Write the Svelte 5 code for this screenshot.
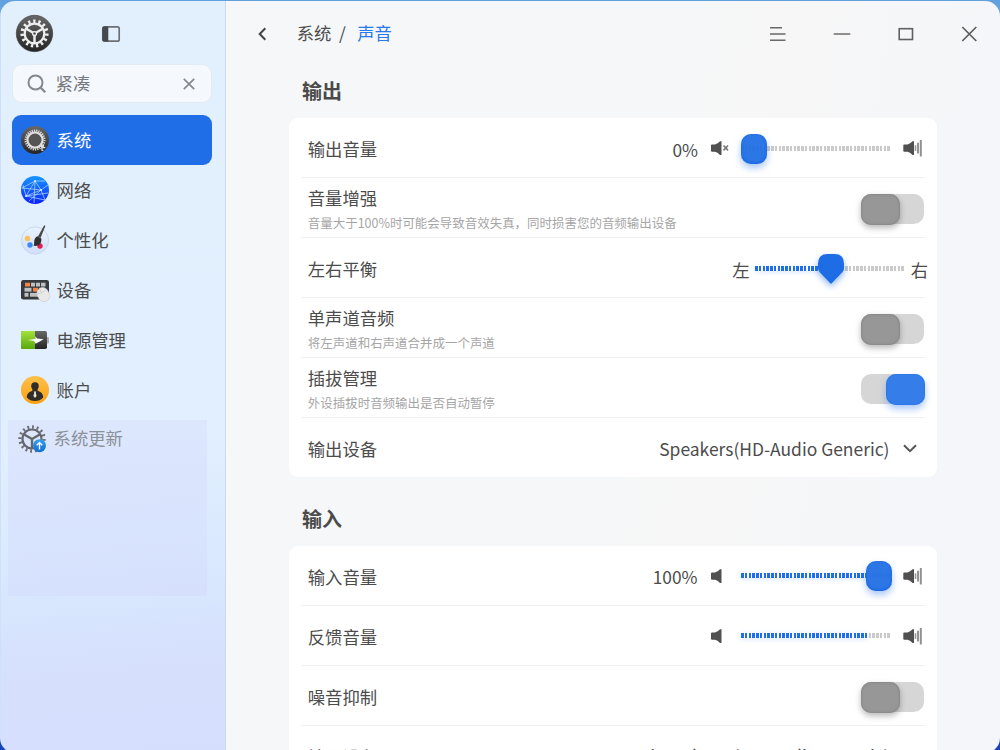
<script>
  const navItems = [
    { id: 'system', label: '系统', active: true },
    { id: 'network', label: '网络' },
    { id: 'personal', label: '个性化' },
    { id: 'devices', label: '设备' },
    { id: 'power', label: '电源管理' },
    { id: 'account', label: '账户' },
  ];
  const output = [
    { label: '输出音量', type: 'volume', percent: '0%', low: 'muted', fill: 0, thumb: 0 },
    { label: '音量增强', hint: '音量大于100%时可能会导致音效失真，同时损害您的音频输出设备', type: 'switch', on: false },
    { label: '左右平衡', type: 'balance', fill: 66 },
    { label: '单声道音频', hint: '将左声道和右声道合并成一个声道', type: 'switch', on: false },
    { label: '插拔管理', hint: '外设插拔时音频输出是否自动暂停', type: 'switch', on: true },
    { label: '输出设备', type: 'select', value: 'Speakers(HD-Audio Generic)' },
  ];
  const input = [
    { label: '输入音量', type: 'volume', percent: '100%', low: 'plain', fill: 126, thumb: 125 },
    { label: '反馈音量', type: 'volume', percent: '', low: 'plain', fill: 125.5, thumb: null },
    { label: '噪音抑制', type: 'switch', on: false },
    { label: '输入设备', type: 'select', value: 'Microphone(HD-Audio Generic)' },
  ];
  const groups = [
    { title: '输出', rows: output },
    { title: '输入', rows: input, second: true },
  ];
</script>

{#snippet icon(id)}
  <svg class="nav-icon" width="28" height="28" viewBox="0 0 28 28">
    {#if id === 'system'}
      <circle cx="14" cy="14" r="14" fill="url(#dark)" />
      <circle cx="14" cy="14" r="9.5" fill="none" stroke="#dcdcdc" stroke-width="2" pathLength="52" stroke-dasharray="1.1 0.9" />
      <circle cx="14" cy="14" r="7.6" fill="#555" stroke="#dedede" stroke-width="2.2" />
      <path d="M18.5 20.5l2.2-1 1.5 1 .5-1.8M20.7 19.5l.3 4.8 1.4.2M21 22l3.3-.6" fill="none" stroke="#e4e4e4" stroke-width="1.2" />
    {:else if id === 'network'}
      <circle cx="14" cy="14" r="14" fill="url(#net)" />
      <g stroke="#b5dcff" stroke-width=".8" fill="none" opacity=".9">
        <path d="M14 5L5 20L20 14L27 9M14 5L20 14L24 24M14 5L13 27M5 20L24 24M20 14L8 25M14 5L1 12L20 14M14 5L24 5M5 20L2 9M5 20L27 17" />
      </g>
      <g fill="#d5ecff"><circle cx="14" cy="5" r="1" /><circle cx="5" cy="20" r="1" /><circle cx="20" cy="14" r="1" /></g>
    {:else if id === 'personal'}
      <circle cx="14" cy="14.5" r="13.6" fill="url(#pal)" stroke="#bdcdea" stroke-width=".7" />
      <circle cx="12.5" cy="6" r="3.2" fill="#e4effd" />
      <circle cx="6.5" cy="12.5" r="2.7" fill="#f8c35a" /><circle cx="9" cy="19" r="2.7" fill="#3c88f5" /><circle cx="19" cy="20" r="2.7" fill="#e31d4d" />
      <path d="M23.2-.8l1.2.8-4.9 12-2.6-1.6z" fill="#4a4a4a" />
      <path d="M16.3 10.2l4 2.4c.5 3-.9 6.1-3 6.8-1.8.5-3.6.8-4.9.1 1.1-.9.7-2.4.8-4.2.1-2.3 1.4-4.2 3.1-5.1z" fill="#303030" />
    {:else if id === 'devices'}
      <rect x="0" y="4" width="28" height="19.5" rx="2.3" fill="#36393d" />
      <g fill="#bfc0c2"><rect x="10" y="6.7" width="4" height="3.8" /><rect x="15" y="6.7" width="4" height="3.8" /><rect x="20" y="6.7" width="4.5" height="3.8" /><rect x="3.5" y="11.8" width="7" height="3.8" /><rect x="18" y="11.8" width="6" height="3.8" /><rect x="3.5" y="16.9" width="4" height="3.8" /><rect x="9" y="16.9" width="9" height="3.8" /></g>
      <rect x="4" y="6.7" width="5" height="3.8" fill="#f28546" /><rect x="12" y="11.8" width="5" height="3.8" fill="#f28546" />
      <rect x="16.5" y="11.5" width="11.5" height="14.5" rx="5.7" fill="#e9e9e9" stroke="#c9c9c9" stroke-width=".5" transform="rotate(-28 22 18.5)" />
      <path d="M15.8 17.5q4 1 8.7-3.2M20.3 16.5l-1.7-3.7" stroke="#bdbdbd" stroke-width=".6" fill="none" />
    {:else if id === 'power'}
      <rect x="24" y="11" width="4" height="6.5" rx="1.2" fill="#aaa" />
      <rect x="0" y="5" width="26" height="18" rx="1.7" fill="url(#dark)" />
      <path d="M1.7 5H14V23H1.7Q0 23 0 21.3V6.7Q0 5 1.7 5z" fill="url(#green)" />
      <path d="M14.2 10.2L16.2 12.6 22.6 13.3 14.6 17.8 13.2 15 6.8 13.9 14.4 13z" fill="#fff" />
    {:else if id === 'account'}
      <circle cx="14" cy="14" r="14" fill="url(#amber)" />
      <circle cx="14" cy="10" r="3.8" fill="#302c29" />
      <path d="M11.5 12h5l.3 3c3 .6 5.2 2.5 5.4 6.4-4 4.7-12.3 4.7-16.4 0 .2-3.9 2.5-5.8 5.5-6.4z" fill="#302c29" />
      <path d="M12.7 15.5h2.6l-.5 1.3.8 3.2-1.6 2-1.6-2 .8-3.2z" fill="#e9dfd2" />
    {/if}
  </svg>
{/snippet}

{#snippet speaker(kind)}
  <svg width="20" height="20" viewBox="0 0 20 20" class="speaker">
    {#if kind === 'loud'}
      <path d="M.3 7.4Q.3 6.5 1.2 6.5H4.5Q7 6 9.5 3.2H11V17H9.5Q7 14.2 4.5 13.7H1.2Q.3 13.7.3 12.8z" fill="#505050" />
      <path d="M12.5 7.3v5.8" stroke="#999" stroke-width="1.6" /><path d="M15 4.8v10.6" stroke="#909090" stroke-width="1.9" /><path d="M17.8 2v16.4" stroke="#909090" stroke-width="2" />
    {:else}
      <path d="M0 7.4Q0 6.5.9 6.5H4Q6.5 6 9 3.2H10.5V17H9Q6.5 14.2 4 13.7H.9Q0 13.7 0 12.8z" fill="#505050" />
      {#if kind === 'muted'}<path d="M12.5 7.5l4.5 4.9M17 7.5l-4.5 4.9" stroke="#777" stroke-width="1.6" />{/if}
    {/if}
  </svg>
{/snippet}

<svg class="defs" width="0" height="0">
  <defs>
    <linearGradient id="dark" x2="0" y2="1"><stop stop-color="#686868" /><stop offset="1" stop-color="#252525" /></linearGradient>
    <linearGradient id="net" x2="0" y2="1"><stop stop-color="#1798ff" /><stop offset="1" stop-color="#0a20ff" /></linearGradient>
    <linearGradient id="pal" x2="0" y2="1"><stop stop-color="#eaf3fe" /><stop offset="1" stop-color="#d0def8" /></linearGradient>
    <linearGradient id="green" x2="0" y2="1"><stop stop-color="#a4e23c" /><stop offset="1" stop-color="#59a80c" /></linearGradient>
    <linearGradient id="amber" x2="0" y2="1"><stop stop-color="#ffc04c" /><stop offset="1" stop-color="#f9a10f" /></linearGradient>
    <linearGradient id="sky" x2="0" y2="1"><stop stop-color="#33a1f0" /><stop offset="1" stop-color="#0e6cd0" /></linearGradient>
  </defs>
</svg>

<div class="desktop">
  <div class="window">
    <aside>
      <div class="brand">
        <svg width="37" height="37" viewBox="-18.5 -18.5 37 37">
          <circle r="18.2" fill="url(#dark)" stroke="#383838" stroke-width=".6" />
          <circle r="12.3" fill="none" stroke="#eee" stroke-width="3.6" pathLength="30" stroke-dasharray=".9 1.1" />
          <circle r="9.8" fill="none" stroke="#eee" stroke-width="2.2" />
          <path d="M0 0L-8.7-5M0 0L8.7-5M0 0V10" stroke="#eee" stroke-width="2.5" />
          <circle r="2.6" fill="#eee" /><circle r="1.3" fill="#555" />
        </svg>
        <svg width="18" height="16" viewBox="0 0 18 16">
          <rect x=".8" y=".8" width="16.4" height="14.4" rx="1.8" fill="none" stroke="#6c7075" stroke-width="1.7" />
          <path d="M2 .4H6.3V15.4H2Q.3 15.4.3 13.7V2.1Q.3.4 2 .4z" fill="#45484d" />
        </svg>
      </div>
      <div class="search">
        <svg width="20" height="20" viewBox="0 0 20 20"><circle cx="8.5" cy="8.5" r="7" fill="none" stroke="#85888c" stroke-width="2" /><path d="M13.6 13.6l4.6 4.6" stroke="#85888c" stroke-width="2.2" /></svg>
        <span>紧凑</span>
        <svg width="12" height="12" viewBox="0 0 12 12"><path d="M.8.8l10.4 10.4M11.2.8L.8 11.2" stroke="#85888c" stroke-width="1.7" /></svg>
      </div>
      <nav>
        {#each navItems as item}
          <div class="item" class:active={item.active}>{@render icon(item.id)}<span>{item.label}</span></div>
        {/each}
      </nav>
      <div class="update">
        <svg width="29" height="28" viewBox="-14 -14 29 28">
          <circle r="12" fill="none" stroke="#6d7075" stroke-width="3.4" pathLength="32" stroke-dasharray=".8 1.2" />
          <circle r="9.5" fill="none" stroke="#64676c" stroke-width="2.2" />
          <path d="M0 0L-8.3-4.8M0 0L8.3-4.8M0 0V9.5" stroke="#64676c" stroke-width="2.4" />
          <circle cx="7.5" cy="6.7" r="6.5" fill="url(#sky)" /><path d="M7.5 10.5V4M4.7 6.3l2.8-2.8 2.8 2.8" fill="none" stroke="#fff" stroke-width="1.4" />
        </svg>
        <span>系统更新</span>
      </div>
    </aside>

    <main>
      <header>
        <svg class="back" width="9" height="14" viewBox="0 0 9 14"><path d="M7.3 1.3L1.7 7l5.6 5.7" fill="none" stroke="#444" stroke-width="2" /></svg>
        <div class="crumbs"><span>系统</span><span class="slash">/</span><span class="current">声音</span></div>
        <div class="controls">
          <svg width="18" height="16" viewBox="0 0 18 16"><path d="M1 1.7h12M1 8h15.5M1 14.3h15.5" stroke="#696969" stroke-width="1.5" /></svg>
          <svg width="18" height="16" viewBox="0 0 18 16"><path d="M.7 8h16.6" stroke="#6d6d6d" stroke-width="1.6" /></svg>
          <svg width="18" height="16" viewBox="0 0 18 16"><rect x="2.2" y="2.7" width="13.3" height="10.8" fill="none" stroke="#606060" stroke-width="1.6" /></svg>
          <svg width="18" height="16" viewBox="0 0 18 16"><path d="M1.3 1l14 14M15.3 1L1.3 15" stroke="#5d5d5d" stroke-width="1.7" /></svg>
        </div>
      </header>

      {#each groups as group}
        <section class:second={group.second}>
          <h2>{group.title}</h2>
          <div class="card">
            {#each group.rows as row}
              <div class="row">
                <div class="text" class:with-hint={row.hint}><div class="label">{row.label}</div>{#if row.hint}<div class="hint">{row.hint}</div>{/if}</div>
                {#if row.type === 'volume'}
                  <div class="volume">
                    <span class="percent">{row.percent}</span>
                    {@render speaker(row.low)}
                    <div class="slider">
                      <div class="track"></div><div class="fill" style="width: {row.fill}px"></div>
                      {#if row.thumb !== null}<div class="thumb" style="left: {row.thumb}px"></div>{/if}
                    </div>
                    {@render speaker('loud')}
                  </div>
                {:else if row.type === 'balance'}
                  <div class="balance">
                    <span>左</span>
                    <div class="slider">
                      <div class="track"></div><div class="fill" style="width: {row.fill}px"></div>
                      <svg class="drop" width="26" height="30" viewBox="0 0 26 30"><path d="M9.5 0h7Q26 0 26 9.5V14Q26 16.5 24.3 18.2L13 30 1.7 18.2Q0 16.5 0 14V9.5Q0 0 9.5 0z" fill="#1f6de4" /></svg>
                    </div>
                    <span>右</span>
                  </div>
                {:else if row.type === 'switch'}
                  <div class="switch" class:on={row.on}><div class="knob"></div></div>
                {:else}
                  <div class="select"><span>{row.value}</span><svg width="14" height="9" viewBox="0 0 14 9"><path d="M1 1.2l6 6 6-6" fill="none" stroke="#555" stroke-width="2" /></svg></div>
                {/if}
              </div>
            {/each}
          </div>
        </section>
      {/each}
    </main>
  </div>
</div>

<style>
  :global(body) { margin: 0; overflow: hidden; }
  .defs { display: block; height: 0; }
  .desktop {
    box-sizing: border-box; width: 1000px; height: 750px; padding-top: 1px; overflow: hidden;
    background: linear-gradient(#60a0de 0, #75b2ec 40px, #1744b8 730px);
    font-family: "Noto Sans CJK SC", sans-serif; font-size: 17.33px; line-height: 26px; color: #4c4c4c;
  }
  .window { display: flex; width: 1000px; height: 752px; border-radius: 15px; overflow: hidden; }
  svg { flex: none; display: block; overflow: visible; }
  aside {
    box-sizing: border-box; width: 226px; flex: none; border-right: 1px solid #cfdae9; border-left: 1px solid #cfe1fa;
    background: linear-gradient(175deg, #e2f0fe 0, #e1effe 58%, #d9e8fe 76%, #d6e1fd 86%, #d6defd 100%);
  }
  .brand { display: flex; align-items: center; height: 37px; padding: 14px 0 0 15.4px; gap: 49px; }
  .search {
    box-sizing: border-box; display: flex; align-items: center; width: 199.5px; height: 39px; margin: 12px 0 0 11.4px;
    padding: 0 16px 0 13.2px; border: 1px solid #e5ebf2; border-radius: 10px; background: #f5f8fd; color: #777a7e;
  }
  .search span { flex: 1; margin: -2px 0 0 9px; }
  nav { margin: 12px 0 0 11.4px; }
  .item { box-sizing: border-box; display: flex; align-items: center; gap: 7.6px; width: 200px; height: 50px; padding-left: 8.6px; border-radius: 9px; }
  .nav-icon { margin-top: -1px; }
  .item.active { background: #1f6de7; color: #fff; }
  .update {
    box-sizing: border-box; display: flex; align-items: flex-start; gap: 6.6px; width: 199px; height: 176px; margin: 5px 0 0 7px;
    padding: 5px 0 0 10px; background: rgba(209, 214, 251, .33); color: #8b9098;
  }
  main { flex: 1; background: linear-gradient(100deg, #f5f7f9 0, #f5f7f9 45%, #f7f7f7 60%, #f5f6f9 85%); overflow: hidden; }
  header { display: flex; align-items: center; height: 65px; }
  .back { margin: 0 0 0 32.4px; }
  .crumbs { display: flex; margin: -2px 0 0 29.4px; }
  .slash { margin: 0 11.5px 0 7.5px; }
  .current { color: #2a78ee; }
  .controls { display: flex; gap: 46px; margin: 1px 21.5px 0 auto; }
  h2 { margin: 0; padding: 0 0 0 76px; height: 52px; font-size: 20px; line-height: 50px; font-weight: 700; color: #4a4a4a; }
  section.second h2 { height: 69px; line-height: 84px; }
  .card { width: 648px; height: 359px; margin-left: 63px; border-radius: 9px; background: #fff; }
  .row {
    box-sizing: border-box; display: flex; align-items: center; justify-content: space-between; height: 60px;
    margin: 0 12px; padding-left: 6.8px; border-bottom: 1px solid #f0f0f1;
  }
  .row:last-child { border: 0; }
  .text { padding-top: 3px; }
  .label { line-height: 26px; }
  .row:last-child .text { padding-top: 1px; }
  .hint { font-size: 12.47px; line-height: 20px; color: #a6a6a6; }
  .text.with-hint { padding-top: 3px; }
  .with-hint .label { line-height: 24px; }
  .with-hint .hint { padding-top: 3px; margin-bottom: -1px; }
  .volume { display: flex; align-items: center; padding-right: 2px; }
  .volume .speaker { margin-top: 1px; }
  .percent { margin: 4px 13px 0 0; }
  .slider { position: relative; width: 150px; height: 30px; margin: 2px 0 0 10px; }
  .volume .slider { margin-right: 12px; }
  .track, .fill {
    position: absolute; left: 0; top: 12px; height: 5px; width: 149px;
    background: repeating-linear-gradient(90deg, var(--c) 0 3px, transparent 3px 4px, var(--c) 4px 6px, transparent 6px 8px, var(--c) 8px 10px, transparent 10px 11px, var(--c) 11px 14px, transparent 14px 15px);
  }
  .track { --c: #cacaca; }
  .fill { --c: #1f6de8; background-color: #fff; box-shadow: 0 1px 5px rgba(31, 109, 232, .18); }
  .thumb {
    position: absolute; top: 0; box-sizing: border-box; width: 26px; height: 30px; border-radius: 10px;
    background: rgba(31, 109, 228, .94); box-shadow: 0 4px 7px rgba(31, 109, 232, .38), inset 0 -1px 3px #1464de;
  }
  .balance { display: flex; align-items: center; margin-right: -3px; }
  .balance span { padding-top: 4px; }
  .balance .slider { margin: 2px 6px 0 5px; }
  .drop { position: absolute; left: 63px; top: 0; filter: drop-shadow(0 3px 3px rgba(31, 109, 232, .5)); }
  .switch { position: relative; width: 63px; height: 30px; margin: 3px 1px 0 0; border-radius: 10px; background: #d6d6d6; }
  .knob {
    position: absolute; left: 0; top: 0; width: 38.5px; height: 31px; border-radius: 10px; background: #979797;
    box-shadow: 0 3px 6px rgba(0, 0, 0, .28), inset 0 0 3px #7b7b7b;
  }
  .on .knob { left: 25px; background: #357eea; box-shadow: 0 4px 7px rgba(31, 109, 232, .38), inset 0 0 2px #1769e5; }
  .select { display: flex; align-items: center; gap: 13.5px; padding: 1px 8px 0 0; font-size: 17.45px; }
  .second .volume .slider { margin-top: 0; }
  .second .volume .speaker { margin-top: 0; }
  .second .percent { margin-top: 3px; margin-right: 13.5px; }
  .second .text { padding-top: 2px; }
  .second .row:last-child .text { padding-top: 1px; }
  .second .select { padding-top: 0; padding-bottom: 1px; }
</style>
